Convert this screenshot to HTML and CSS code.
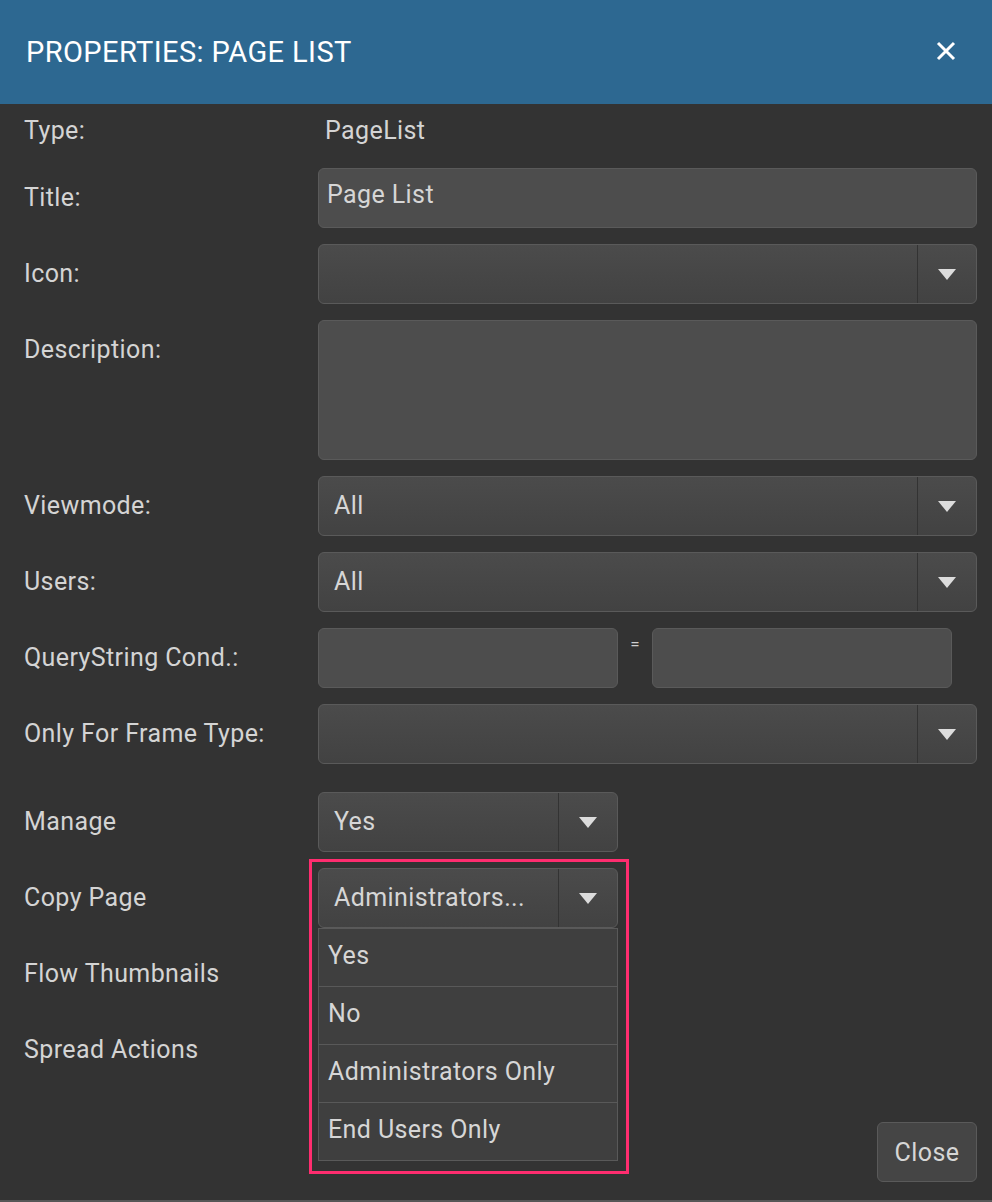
FILE: index.html
```html
<!DOCTYPE html>
<html>
<head>
<meta charset="utf-8">
<link rel="stylesheet" href="styles.css">
</head>
<body>
<div class="dialog">
  <header class="dlg-head">
    <h1 class="dlg-title">PROPERTIES: PAGE LIST</h1>
    <button class="dlg-x" aria-label="Close">
      <svg width="20" height="20" viewBox="0 0 20 20"><path d="M2 2 L18 18 M18 2 L2 18" stroke="#fff" stroke-width="3" stroke-linecap="butt" fill="none"/></svg>
    </button>
  </header>
  <div class="dlg-body">
    <div class="row row-type">
      <div class="label">Type:</div>
      <div class="value">PageList</div>
    </div>
    <div class="row">
      <div class="label">Title:</div>
      <div class="input full">Page List</div>
    </div>
    <div class="row">
      <div class="label">Icon:</div>
      <div class="select full"><span class="sel-text"></span><span class="sel-arrow"><i class="tri"></i></span></div>
    </div>
    <div class="row">
      <div class="label">Description:</div>
      <div class="input full textarea"></div>
    </div>
    <div class="row">
      <div class="label">Viewmode:</div>
      <div class="select full"><span class="sel-text">All</span><span class="sel-arrow"><i class="tri"></i></span></div>
    </div>
    <div class="row">
      <div class="label">Users:</div>
      <div class="select full"><span class="sel-text">All</span><span class="sel-arrow"><i class="tri"></i></span></div>
    </div>
    <div class="row">
      <div class="label">QueryString Cond.:</div>
      <div class="input half"></div>
      <span class="eq">=</span>
      <div class="input half"></div>
    </div>
    <div class="row">
      <div class="label">Only For Frame Type:</div>
      <div class="select full"><span class="sel-text"></span><span class="sel-arrow"><i class="tri"></i></span></div>
    </div>
    <div class="row row-gap">
      <div class="label">Manage</div>
      <div class="select half"><span class="sel-text">Yes</span><span class="sel-arrow"><i class="tri"></i></span></div>
    </div>
    <div class="row">
      <div class="label">Copy Page</div>
      <div class="open-wrap">
        <div class="select half"><span class="sel-text">Administrators...</span><span class="sel-arrow"><i class="tri"></i></span></div>
        <ul class="menu">
          <li>Yes</li>
          <li>No</li>
          <li>Administrators Only</li>
          <li>End Users Only</li>
        </ul>
        <div class="highlight"></div>
      </div>
    </div>
    <div class="row">
      <div class="label">Flow Thumbnails</div>
    </div>
    <div class="row">
      <div class="label">Spread Actions</div>
    </div>
    <div class="footer">
      <button class="btn">Close</button>
    </div>
  </div>
</div>
</body>
</html>
```

FILE: styles.css
```css
* { box-sizing: border-box; }
html, body { margin: 0; padding: 0; }
body {
  background: #333333;
  font-family: Roboto, "Liberation Sans", sans-serif;
  color: #d2d2d2;
}
.dialog {
  width: 992px;
  height: 1202px;
  background: #333333;
  border-bottom: 2px solid #565656;
  display: flex;
  flex-direction: column;
}
.dlg-head {
  height: 104px;
  background: #2d6891;
  display: flex;
  align-items: center;
  justify-content: space-between;
  padding: 0 36px 0 26px;
  flex: none;
}
.dlg-title {
  margin: 0;
  font-size: 29px;
  font-weight: 400;
  color: #ffffff;
  letter-spacing: 0.4px;
}
.dlg-x {
  background: none;
  border: 0;
  padding: 0;
  width: 20px;
  height: 20px;
  margin-top: -2px;
  display: block;
}
.dlg-x svg { display: block; }
.dlg-body {
  flex: 1;
  padding: 14px 15px 0 24px;
  display: flex;
  flex-direction: column;
}
.row {
  display: flex;
  align-items: flex-start;
  margin-bottom: 16px;
  min-height: 60px;
}
.row-type {
  min-height: 26px;
  margin-bottom: 24px;
}
.row-gap { margin-top: 12px; }
.label {
  width: 294px;
  flex: none;
  font-size: 25px;
  letter-spacing: 0.4px;
  line-height: 60px;
  color: #d4d4d4;
  white-space: nowrap;
}
.row-type .label, .row-type .value {
  line-height: 26px;
}
.value {
  font-size: 25px;
  letter-spacing: 0.4px;
  padding-left: 7px;
  color: #d4d4d4;
}
.input {
  height: 60px;
  background: #4d4d4d;
  border: 1px solid #5a5a5a;
  border-radius: 6px;
  font-size: 25px;
  letter-spacing: 0.4px;
  line-height: 52px;
  padding-left: 8px;
  color: #d6d6d6;
}
.full { flex: 1; }
.half { width: 300px; flex: none; }
.textarea { height: 140px; }
.eq {
  width: 34px;
  flex: none;
  text-align: center;
  font-size: 17px;
  line-height: 20px;
  padding-top: 6px;
  color: #cfcfcf;
}
.select {
  height: 60px;
  display: flex;
  background: linear-gradient(to bottom, #4b4b4b, #424242);
  border: 1px solid #5a5a5a;
  border-radius: 6px;
}
.sel-text {
  flex: 1;
  font-size: 25px;
  letter-spacing: 0.4px;
  line-height: 58px;
  padding-left: 15px;
  color: #d6d6d6;
  white-space: nowrap;
  overflow: hidden;
}
.sel-arrow {
  width: 59px;
  flex: none;
  border-left: 1px solid #333333;
  display: flex;
  align-items: center;
  justify-content: center;
}
.tri {
  display: block;
  width: 0;
  height: 0;
  border-left: 9.5px solid transparent;
  border-right: 9.5px solid transparent;
  border-top: 11px solid #dcdcdc;
  margin-top: 1px;
}
.open-wrap {
  position: relative;
  width: 300px;
  flex: none;
}
.menu {
  position: absolute;
  left: 0;
  top: 60px;
  width: 300px;
  margin: 0;
  padding: 0;
  list-style: none;
  border: 1px solid #595959;
  background: #3f3f3f;
  z-index: 2;
}
.menu li {
  height: 58px;
  border-top: 1px solid #595959;
  font-size: 25px;
  letter-spacing: 0.4px;
  line-height: 54px;
  padding-left: 9px;
  color: #d6d6d6;
}
.menu li:first-child {
  border-top: 0;
  height: 57px;
}
.highlight {
  position: absolute;
  left: -9px;
  top: -9px;
  width: 320px;
  height: 315px;
  border: 3px solid #ff2d6f;
  z-index: 3;
  pointer-events: none;
}
.footer {
  display: flex;
  justify-content: flex-end;
  margin-top: 26px;
}
.btn {
  width: 100px;
  height: 60px;
  background: #454545;
  border: 1px solid #5a5a5a;
  border-radius: 6px;
  font-family: Roboto, "Liberation Sans", sans-serif;
  font-size: 25px;
  letter-spacing: 0.4px;
  color: #d6d6d6;
  padding: 0;
}
```
